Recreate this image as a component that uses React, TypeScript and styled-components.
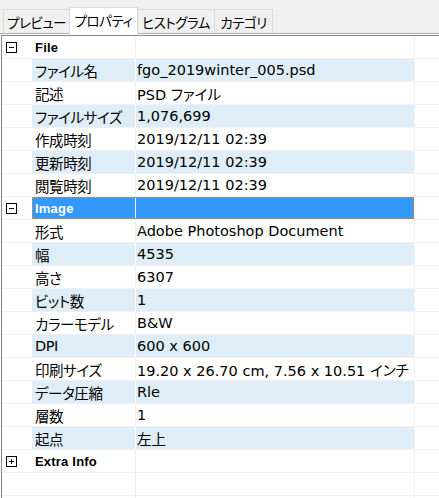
import React from "react";
import styled, { createGlobalStyle, css } from "styled-components";

const Global = createGlobalStyle`
  html, body {
    margin: 0;
    padding: 0;
    background: #f0f0f0;
  }
  #root {
    width: 439px;
    height: 498px;
  }
`;

const uiFont = `"Noto Sans", "Noto Sans CJK JP", sans-serif`;
const cellFont = `"DejaVu Sans", "Noto Sans CJK JP", sans-serif`;

const Window = styled.div`
  width: 439px;
  height: 498px;
  overflow: hidden;
  background: #f0f0f0;
  display: flex;
  flex-direction: column;
  font-family: ${uiFont};
  font-feature-settings: "palt";
  color: #000;
`;

const TabStrip = styled.div`
  height: 33px;
  flex: none;
  display: flex;
  align-items: flex-end;
  padding-left: 3px;
`;

const Tab = styled.div<{ $active?: boolean; $w: number }>`
  box-sizing: border-box;
  width: ${(p) => p.$w}px;
  height: 24px;
  margin-left: -1px;
  &:first-child {
    margin-left: 0;
  }
  border: 1px solid #d9d9d9;
  border-bottom: none;
  background: #f0f0f0;
  display: flex;
  align-items: center;
  justify-content: center;
  font-size: 13.5px;
  letter-spacing: -0.5px;
  white-space: nowrap;
  ${(p) =>
    p.$active &&
    css`
      position: relative;
      z-index: 1;
      height: 27px;
      margin-bottom: -1px;
      background: #fff;
      padding-bottom: 2px;
    `}
`;

const Panel = styled.div`
  flex: 1;
  min-height: 0;
  border-top: 1px solid #adadad;
  background: #fff;
  padding: 1px 0 0 1px;
  display: flex;
`;

const List = styled.div`
  flex: 1;
  min-width: 0;
  border-top: 1px solid #828790;
  border-left: 1px solid #828790;
  background: #fff;
  overflow: hidden;
`;

type Tone = "plain" | "alt" | "selected";

const Row = styled.div`
  display: flex;
  height: 22px;
  border-bottom: 1px solid #f0f0f0;
`;

const Expander = styled.div`
  width: 30px;
  flex: none;
  display: flex;
  align-items: center;
  padding-left: 4px;
  padding-top: 1px;
  box-sizing: border-box;
`;

const ToggleBox = styled.span<{ $open: boolean }>`
  position: relative;
  box-sizing: border-box;
  width: 11px;
  height: 11px;
  border: 1px solid #000;
  background: #fff;
  &::before {
    content: "";
    position: absolute;
    left: 2px;
    top: 4px;
    width: 5px;
    height: 1px;
    background: #000;
  }
  ${(p) =>
    !p.$open &&
    css`
      &::after {
        content: "";
        position: absolute;
        left: 4px;
        top: 2px;
        width: 1px;
        height: 5px;
        background: #000;
      }
    `}
`;

const Band = styled.div<{ $tone: Tone }>`
  width: 382px;
  flex: none;
  display: flex;
  box-sizing: border-box;
  background: ${(p) =>
    p.$tone === "alt" ? "#deedf7" : p.$tone === "selected" ? "#3399ff" : "#fff"};
  color: ${(p) => (p.$tone === "selected" ? "#fff" : "#000")};
  ${(p) =>
    p.$tone === "selected" &&
    css`
      outline: 1px dotted #f08a1c;
      outline-offset: -1px;
    `}
`;

const NameCell = styled.div<{ $heading?: boolean; $tone: Tone }>`
  box-sizing: border-box;
  width: 104px;
  flex: none;
  border-right: 1px solid ${(p) => (p.$tone === "plain" ? "#f0f0f0" : "#fff")};
  padding-left: 3px;
  display: flex;
  align-items: center;
  white-space: nowrap;
  overflow: hidden;
  font-family: ${cellFont};
  font-size: 14.5px;
  letter-spacing: -0.4px;
  ${(p) =>
    p.$heading &&
    css`
      font-family: "Liberation Sans", "Noto Sans CJK JP", sans-serif;
      font-weight: bold;
      font-size: 13px;
      letter-spacing: 0.2px;
      padding-top: 1px;
    `}
`;

const ValueCell = styled.div`
  flex: 1;
  padding-left: 1px;
  display: flex;
  align-items: center;
  white-space: nowrap;
  overflow: hidden;
  font-family: ${cellFont};
  font-size: 14.5px;
`;

const Filler = styled.div`
  flex: 1;
  border-left: 1px solid #f0f0f0;
`;

type Item =
  | { kind: "group"; label: string; open: boolean; selected?: boolean }
  | { kind: "prop"; name: string; value: string }
  | { kind: "blank" };

const items: Item[] = [
  { kind: "group", label: "File", open: true },
  { kind: "prop", name: "ファイル名", value: "fgo_2019winter_005.psd" },
  { kind: "prop", name: "記述", value: "PSD ファイル" },
  { kind: "prop", name: "ファイルサイズ", value: "1,076,699" },
  { kind: "prop", name: "作成時刻", value: "2019/12/11 02:39" },
  { kind: "prop", name: "更新時刻", value: "2019/12/11 02:39" },
  { kind: "prop", name: "閲覧時刻", value: "2019/12/11 02:39" },
  { kind: "group", label: "Image", open: true, selected: true },
  { kind: "prop", name: "形式", value: "Adobe Photoshop Document" },
  { kind: "prop", name: "幅", value: "4535" },
  { kind: "prop", name: "高さ", value: "6307" },
  { kind: "prop", name: "ビット数", value: "1" },
  { kind: "prop", name: "カラーモデル", value: "B&W" },
  { kind: "prop", name: "DPI", value: "600 x 600" },
  { kind: "prop", name: "印刷サイズ", value: "19.20 x 26.70 cm, 7.56 x 10.51 インチ" },
  { kind: "prop", name: "データ圧縮", value: "Rle" },
  { kind: "prop", name: "層数", value: "1" },
  { kind: "prop", name: "起点", value: "左上" },
  { kind: "group", label: "Extra Info", open: false },
  { kind: "blank" },
  { kind: "blank" },
];

const tabs = [
  { label: "プレビュー", w: 67 },
  { label: "プロパティ", w: 69, active: true },
  { label: "ヒストグラム", w: 78 },
  { label: "カテゴリ", w: 59 },
];

function toneOf(item: Item, index: number): Tone {
  if (item.kind === "blank") return "plain";
  if (item.kind === "group" && item.selected) return "selected";
  return index % 2 === 1 ? "alt" : "plain";
}

export default function App() {
  return (
    <>
      <Global />
      <Window>
        <TabStrip>
          {tabs.map((t) => (
            <Tab key={t.label} $w={t.w} $active={t.active}>
              {t.label}
            </Tab>
          ))}
        </TabStrip>
        <Panel>
          <List>
            {items.map((item, i) => {
              const tone = toneOf(item, i);
              return (
                <Row key={i}>
                  <Expander>
                    {item.kind === "group" && <ToggleBox $open={item.open} />}
                  </Expander>
                  <Band $tone={tone}>
                    <NameCell $tone={tone} $heading={item.kind === "group"}>
                      {item.kind === "group" ? item.label : item.kind === "prop" ? item.name : ""}
                    </NameCell>
                    <ValueCell>{item.kind === "prop" ? item.value : ""}</ValueCell>
                  </Band>
                  <Filler />
                </Row>
              );
            })}
          </List>
        </Panel>
      </Window>
    </>
  );
}
